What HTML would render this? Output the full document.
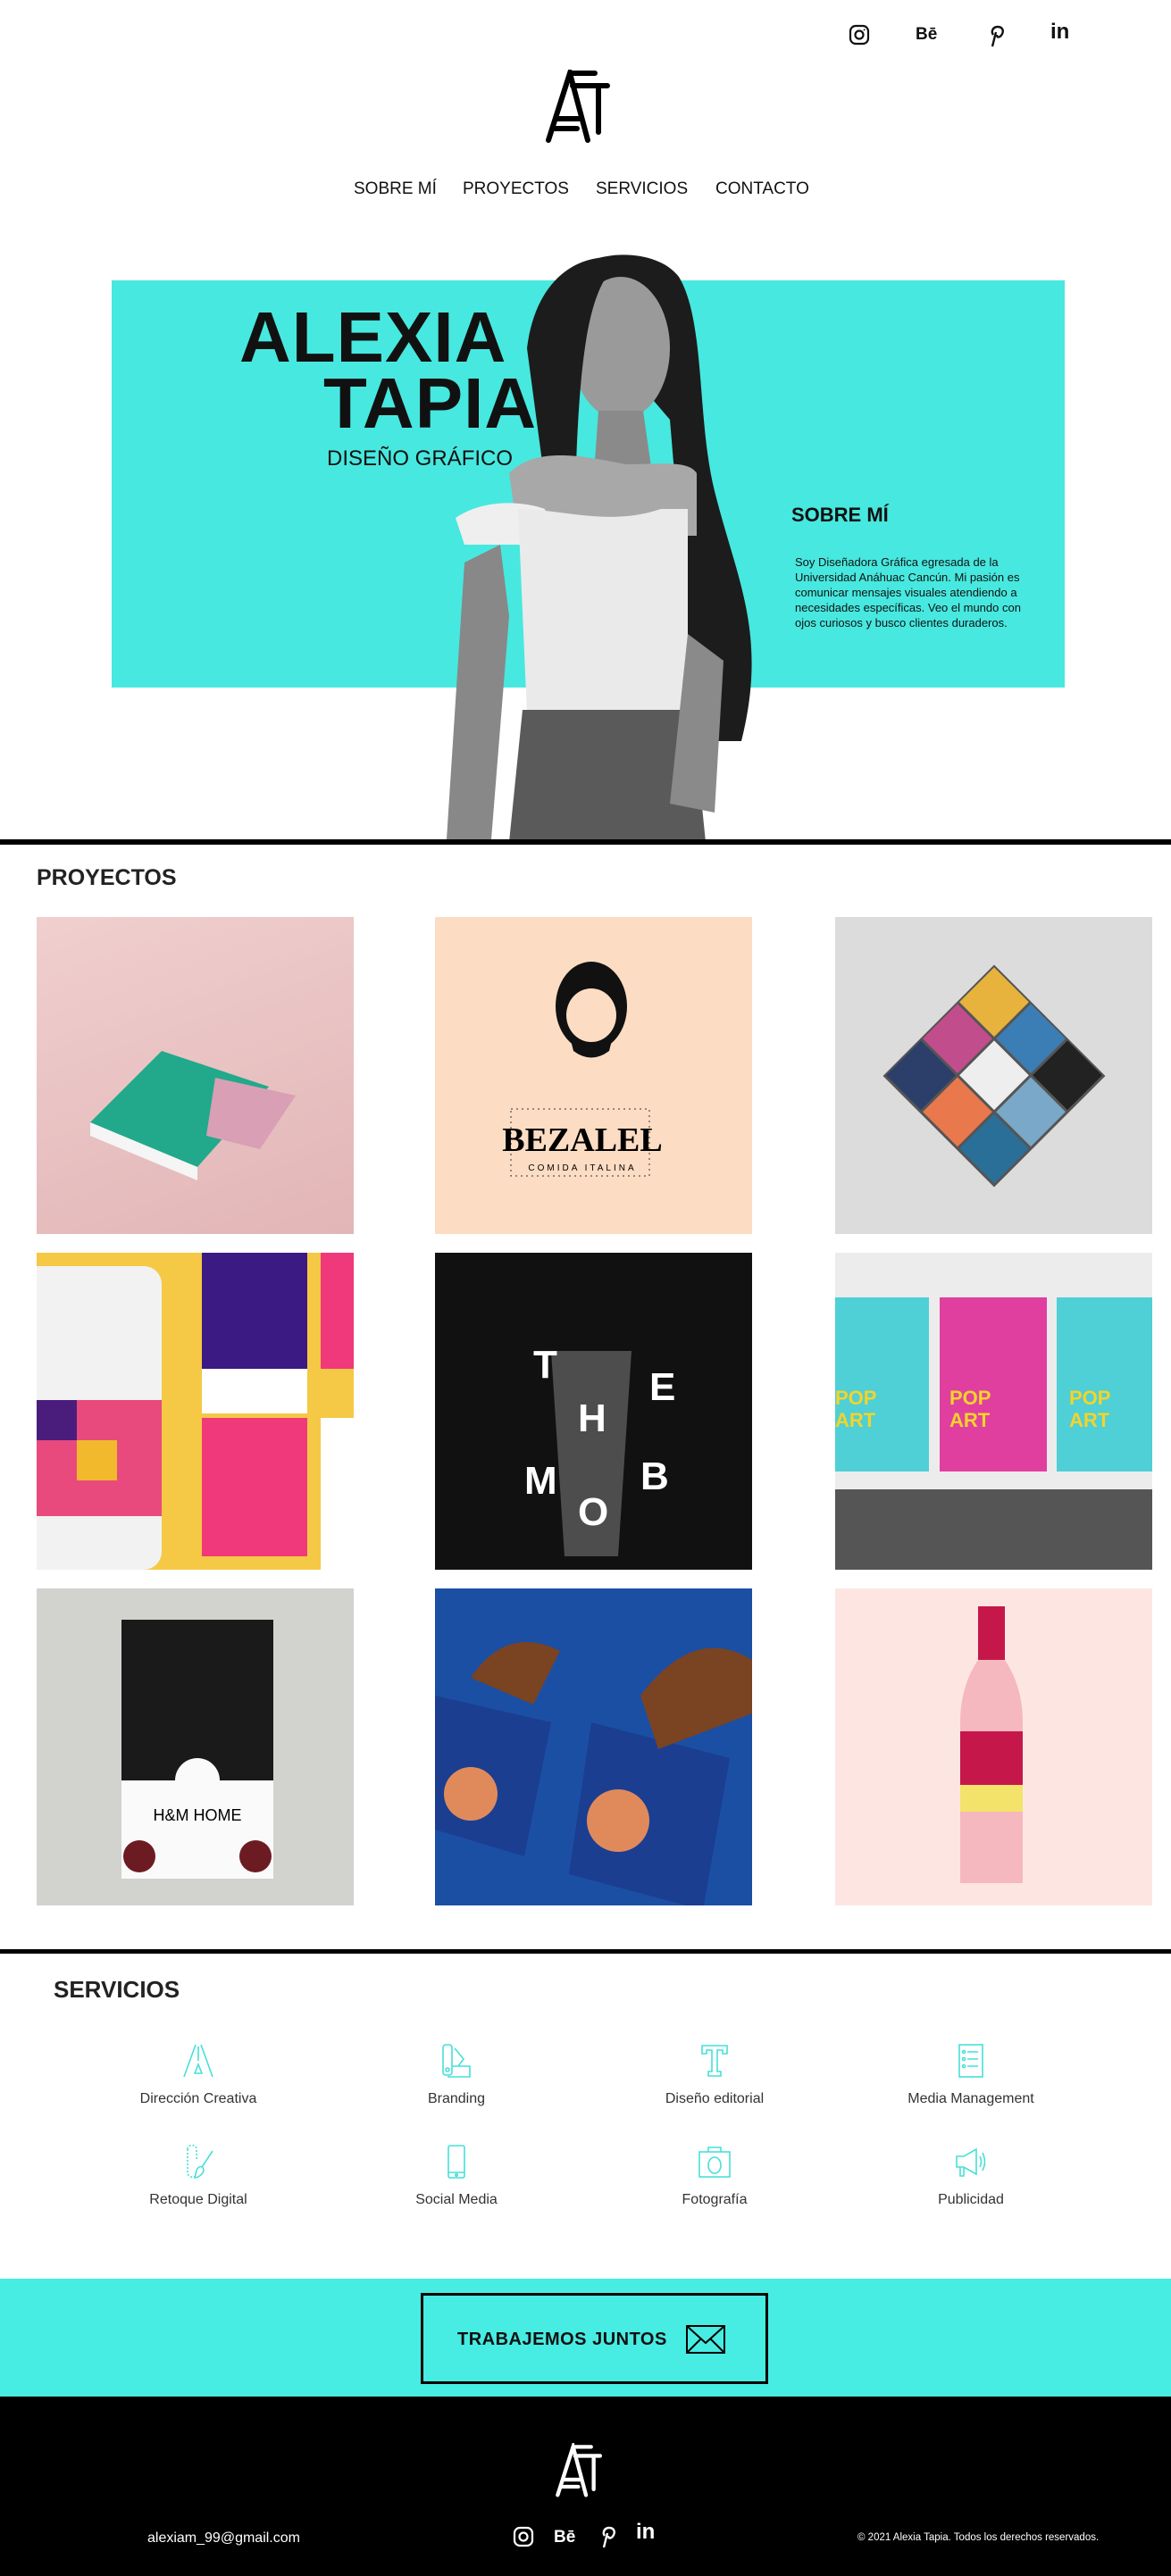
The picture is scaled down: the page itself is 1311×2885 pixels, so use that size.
<!DOCTYPE html>
<html><head><meta charset="utf-8">
<style>
*{margin:0;padding:0;box-sizing:border-box}
body{width:1311px;height:2885px;background:#fff;font-family:"Liberation Sans",sans-serif;color:#111;position:relative;overflow:hidden}
.a{position:absolute}
.nav{top:201px;font-size:19px;letter-spacing:0}
.tile{position:absolute;width:355px;height:355px;overflow:hidden}
.svc{position:absolute;width:260px;text-align:center;font-size:16px;color:#333}
.svc svg{display:block;margin:0 auto 14px}
</style></head><body>

<svg class="a" style="left:950px;top:27px" width="24" height="24" viewBox="0 0 24 24" fill="none" stroke="#111" stroke-width="2.2"><rect x="2" y="2" width="20" height="20" rx="6"/><circle cx="12" cy="12" r="4.5"/><circle cx="17.6" cy="6.4" r="1" fill="#111" stroke="none"/></svg>
<div class="a" style="left:1025px;top:28px;font-weight:bold;font-size:19px">Bē</div>
<svg class="a" style="left:1106px;top:27px" width="20" height="26" viewBox="0 0 20 26" fill="none" stroke="#111" stroke-width="2.4"><path d="M6 12c-3-4 0-9 5-9s7 4 5 8-6 5-6 1M9 9L5 25"/></svg>
<div class="a" style="left:1176px;top:22px;font-weight:bold;font-size:24px">in</div>

<svg class="a" style="left:608px;top:78px" width="100" height="82" viewBox="0 0 100 82" fill="none" stroke="#000" stroke-width="6" stroke-linecap="round"><path d="M6 79L30 4L50 79"/><path d="M33 4H58M33 18H72M62 18V70M14 55H40M12 66H38"/></svg>

<div class="a nav" style="left:396px">SOBRE MÍ</div>
<div class="a nav" style="left:518px">PROYECTOS</div>
<div class="a nav" style="left:667px">SERVICIOS</div>
<div class="a nav" style="left:801px">CONTACTO</div>

<div class="a" style="left:125px;top:314px;width:1067px;height:456px;background:#47e8df"></div>
<div class="a" style="left:268px;top:338px;font-size:80px;font-weight:bold;letter-spacing:1px;line-height:80px">ALEXIA</div>
<div class="a" style="left:362px;top:412px;font-size:80px;font-weight:bold;letter-spacing:1px;line-height:80px">TAPIA</div>
<div class="a" style="left:366px;top:500px;font-size:24px">DISEÑO GRÁFICO</div>
<svg class="a" style="left:480px;top:270px" width="400" height="673" viewBox="0 0 400 673">
<path d="M150 60C150 10 250 0 280 40C310 90 300 200 320 280C345 380 380 440 350 560L300 560L270 200Z" fill="#1c1c1c"/>
<ellipse cx="215" cy="120" rx="55" ry="80" fill="#9a9a9a"/>
<path d="M110 120C120 40 170 10 220 20C180 40 170 120 165 250L130 270Z" fill="#1c1c1c"/>
<path d="M190 190L240 190L250 260L185 260Z" fill="#8a8a8a"/>
<path d="M90 260C120 230 170 240 220 250C260 250 290 245 300 260L300 330L100 330Z" fill="#a8a8a8"/>
<path d="M30 310C60 290 100 290 130 300L140 340L40 340Z" fill="#efefef"/>
<path d="M80 340L40 360L20 670L70 670L90 420Z" fill="#888"/>
<path d="M100 300C150 300 200 320 260 300L290 300L290 530L110 530Z" fill="#eaeaea"/>
<path d="M105 525L295 525L310 673L90 673Z" fill="#5a5a5a"/>
<path d="M290 440L330 470L320 640L270 630Z" fill="#8a8a8a"/>
</svg>
<div class="a" style="left:886px;top:564px;font-size:22px;font-weight:bold">SOBRE MÍ</div>
<div class="a" style="left:890px;top:621px;font-size:13px;line-height:17px;width:260px">Soy Diseñadora Gráfica egresada de la Universidad Anáhuac Cancún. Mi pasión es comunicar mensajes visuales atendiendo a necesidades específicas. Veo el mundo con ojos curiosos y busco clientes duraderos.</div>

<div class="a" style="left:0;top:940px;width:1311px;height:6px;background:#000"></div>

<div class="a" style="left:41px;top:969px;font-size:25px;font-weight:bold;color:#222">PROYECTOS</div>

<div class="tile" style="left:41px;top:1027px;background:linear-gradient(160deg,#f0cfcf,#e2b5b6)">
<svg width="355" height="355"><path d="M60 230L140 150L260 190L180 280Z" fill="#22a98c"/><path d="M60 230L180 280L180 295L60 245Z" fill="#f5f5f5"/><path d="M200 180L290 200L250 260L190 245Z" fill="#d99fb4"/></svg></div>
<div class="tile" style="left:487px;top:1027px;background:#fcddc4">
<svg width="355" height="355"><ellipse cx="175" cy="100" rx="40" ry="50" fill="#111"/><ellipse cx="175" cy="110" rx="28" ry="30" fill="#fcddc4"/><path d="M150 130Q175 160 200 130L195 150Q175 165 155 150Z" fill="#111"/><path d="M85 215H240V290H85Z" fill="none" stroke="#333" stroke-dasharray="2 4"/><text x="165" y="262" text-anchor="middle" font-size="38" font-weight="bold" font-family="Liberation Serif">BEZALEL</text><text x="165" y="284" text-anchor="middle" font-size="10" letter-spacing="3">COMIDA ITALINA</text></svg></div>
<div class="tile" style="left:935px;top:1027px;background:#dcdcdc">
<svg width="355" height="355"><g transform="rotate(45 178 178)"><rect x="90" y="90" width="176" height="176" fill="#555"/><rect x="92" y="92" width="55" height="55" fill="#e7b33c"/><rect x="150" y="92" width="55" height="55" fill="#3b7db5"/><rect x="208" y="92" width="55" height="55" fill="#222"/><rect x="92" y="150" width="55" height="55" fill="#c24d8d"/><rect x="150" y="150" width="55" height="55" fill="#eee"/><rect x="208" y="150" width="55" height="55" fill="#79a8c8"/><rect x="92" y="208" width="55" height="55" fill="#2c3f6a"/><rect x="150" y="208" width="55" height="55" fill="#e9784c"/><rect x="208" y="208" width="55" height="55" fill="#2a6f98"/></g></svg></div>

<div class="tile" style="left:41px;top:1403px;background:#f5c846">
<svg width="355" height="355"><rect x="-20" y="15" width="160" height="340" rx="20" fill="#f2f2f2"/><rect x="0" y="165" width="140" height="130" fill="#e84a7e"/><rect x="0" y="165" width="45" height="45" fill="#4a1d7c"/><rect x="45" y="210" width="45" height="45" fill="#f3b92c"/><rect x="185" y="0" width="118" height="130" fill="#3b1a83"/><rect x="185" y="130" width="118" height="50" fill="#fff"/><rect x="185" y="185" width="118" height="155" fill="#f0397a"/><rect x="318" y="0" width="37" height="130" fill="#f0397a"/><rect x="318" y="185" width="37" height="170" fill="#fff"/></svg></div>
<div class="tile" style="left:487px;top:1403px;background:#111">
<svg width="355" height="355"><path d="M130 110L220 110L205 340L145 340Z" fill="#777" opacity=".6"/><g fill="#fff" font-weight="bold" font-size="44" font-family="Liberation Sans"><text x="110" y="140">T</text><text x="240" y="165">E</text><text x="160" y="200">H</text><text x="100" y="270">M</text><text x="230" y="265">B</text><text x="160" y="305">O</text></g></svg></div>
<div class="tile" style="left:935px;top:1403px;background:#ececec">
<svg width="355" height="355"><rect x="0" y="265" width="355" height="90" fill="#555"/><rect x="0" y="50" width="105" height="195" fill="#4fcfd6"/><rect x="117" y="50" width="120" height="195" fill="#e03fa0"/><rect x="248" y="50" width="107" height="195" fill="#4fcfd6"/><g fill="#f4d429" font-weight="bold" font-size="22"><text x="0" y="170">POP</text><text x="0" y="195">ART</text><text x="128" y="170">POP</text><text x="128" y="195">ART</text><text x="262" y="170">POP</text><text x="262" y="195">ART</text></g></svg></div>

<div class="tile" style="left:41px;top:1779px;background:#d2d2ce">
<svg width="355" height="355"><rect x="95" y="35" width="170" height="290" fill="#fafafa"/><rect x="95" y="35" width="170" height="180" fill="#1a1a1a"/><circle cx="180" cy="215" r="25" fill="#fafafa"/><text x="180" y="260" text-anchor="middle" font-size="18">H&amp;M HOME</text><circle cx="115" cy="300" r="18" fill="#6d1b22"/><circle cx="245" cy="300" r="18" fill="#6d1b22"/></svg></div>
<div class="tile" style="left:487px;top:1779px;background:#1a4fa4">
<svg width="355" height="355"><path d="M0 120L130 150L100 300L0 270Z" fill="#1b3e91"/><path d="M175 150L330 190L300 360L150 320Z" fill="#1b3e91"/><path d="M40 100Q80 40 140 70L110 130Z" fill="#7a4322"/><path d="M230 120Q290 40 355 80L355 140L250 180Z" fill="#7a4322"/><circle cx="40" cy="230" r="30" fill="#e08a5c"/><circle cx="205" cy="260" r="35" fill="#e08a5c"/></svg></div>
<div class="tile" style="left:935px;top:1779px;background:#fde6e2">
<svg width="355" height="355"><rect x="160" y="20" width="30" height="60" fill="#c6174a"/><path d="M160 80Q140 110 140 150L140 330L210 330L210 150Q210 110 190 80Z" fill="#f5b8be"/><rect x="140" y="160" width="70" height="60" fill="#c6174a"/><rect x="140" y="220" width="70" height="30" fill="#f3e36a"/></svg></div>

<div class="a" style="left:0;top:2183px;width:1311px;height:5px;background:#000"></div>

<div class="a" style="left:60px;top:2213px;font-size:26px;font-weight:bold;color:#222">SERVICIOS</div>

<div class="svc" style="left:92px;top:2288px"><svg width="40" height="40" viewBox="0 0 40 40" fill="none" stroke="#45e0d8" stroke-width="1.6"><path d="M4 38L17 2M36 38L23 2M20 4V20M16 34L20 24L24 34Z"/></svg>Dirección Creativa</div>
<div class="svc" style="left:381px;top:2288px"><svg width="40" height="40" viewBox="0 0 40 40" fill="none" stroke="#45e0d8" stroke-width="1.6"><rect x="5" y="2" width="10" height="34" rx="3"/><path d="M18 6L28 18L22 26M15 26H35V38H10"/><circle cx="10" cy="30" r="2"/></svg>Branding</div>
<div class="svc" style="left:670px;top:2288px"><svg width="40" height="40" viewBox="0 0 40 40" fill="none" stroke="#45e0d8" stroke-width="1.6"><path d="M6 3H34V12H29V8H23V32H27V37H13V32H17V8H11V12H6Z"/></svg>Diseño editorial</div>
<div class="svc" style="left:957px;top:2288px"><svg width="40" height="40" viewBox="0 0 40 40" fill="none" stroke="#45e0d8" stroke-width="1.6"><rect x="7" y="2" width="26" height="36"/><path d="M16 10H28M16 18H28M16 26H28"/><circle cx="12" cy="10" r="1.5"/><circle cx="12" cy="18" r="1.5"/><circle cx="12" cy="26" r="1.5"/></svg>Media Management</div>

<div class="svc" style="left:92px;top:2401px"><svg width="40" height="40" viewBox="0 0 40 40" fill="none" stroke="#45e0d8" stroke-width="1.6"><path d="M8 6C8 0 18 0 18 6V18" stroke-dasharray="2 2"/><path d="M8 6V32C8 38 16 38 16 36" stroke-dasharray="2 2"/><path d="M36 8L24 26M18 30C20 24 26 24 26 30C24 36 18 38 16 38Z"/></svg>Retoque Digital</div>
<div class="svc" style="left:381px;top:2401px"><svg width="40" height="40" viewBox="0 0 40 40" fill="none" stroke="#45e0d8" stroke-width="1.6"><rect x="11" y="2" width="18" height="36" rx="2"/><path d="M11 32H29"/><circle cx="20" cy="35" r="1.2"/></svg>Social Media</div>
<div class="svc" style="left:670px;top:2401px"><svg width="40" height="40" viewBox="0 0 40 40" fill="none" stroke="#45e0d8" stroke-width="1.6"><rect x="3" y="9" width="34" height="28"/><path d="M13 9V4H27V9"/><ellipse cx="20" cy="24" rx="7" ry="9"/></svg>Fotografía</div>
<div class="svc" style="left:957px;top:2401px"><svg width="40" height="40" viewBox="0 0 40 40" fill="none" stroke="#45e0d8" stroke-width="1.6"><path d="M4 14H12L26 6V34L12 26H4Z M8 26V36H12V27M30 14Q33 20 30 26M33 10Q38 20 33 30"/></svg>Publicidad</div>

<div class="a" style="left:0;top:2552px;width:1311px;height:132px;background:#47ece2"></div>
<div class="a" style="left:471px;top:2568px;width:389px;height:102px;border:3px solid #000"></div>
<div class="a" style="left:512px;top:2609px;font-size:20px;font-weight:bold;letter-spacing:.5px">TRABAJEMOS JUNTOS</div>
<svg class="a" style="left:768px;top:2604px" width="44" height="32" viewBox="0 0 44 32" fill="none" stroke="#000" stroke-width="2"><rect x="1" y="1" width="42" height="30"/><path d="M1 1L22 20L43 1M1 31L17 15M43 31L27 15"/></svg>

<div class="a" style="left:0;top:2684px;width:1311px;height:201px;background:#000"></div>
<svg class="a" style="left:620px;top:2736px" width="72" height="62" viewBox="0 0 100 82" fill="none" stroke="#fff" stroke-width="6" stroke-linecap="round"><path d="M6 79L30 4L50 79"/><path d="M33 4H58M33 18H72M62 18V70M14 55H40M12 66H38"/></svg>
<div class="a" style="left:165px;top:2834px;color:#fff;font-size:16px">alexiam_99@gmail.com</div>
<svg class="a" style="left:574px;top:2829px" width="24" height="24" viewBox="0 0 24 24" fill="none" stroke="#fff" stroke-width="2.2"><rect x="2" y="2" width="20" height="20" rx="6"/><circle cx="12" cy="12" r="4.5"/></svg>
<div class="a" style="left:620px;top:2831px;color:#fff;font-weight:bold;font-size:19px">Bē</div>
<svg class="a" style="left:671px;top:2828px" width="20" height="26" viewBox="0 0 20 26" fill="none" stroke="#fff" stroke-width="2.4"><path d="M6 12c-3-4 0-9 5-9s7 4 5 8-6 5-6 1M9 9L5 25"/></svg>
<div class="a" style="left:712px;top:2822px;color:#fff;font-weight:bold;font-size:24px">in</div>
<div class="a" style="left:960px;top:2836px;color:#fff;font-size:11.5px">© 2021 Alexia Tapia. Todos los derechos reservados.</div>
</body></html>
